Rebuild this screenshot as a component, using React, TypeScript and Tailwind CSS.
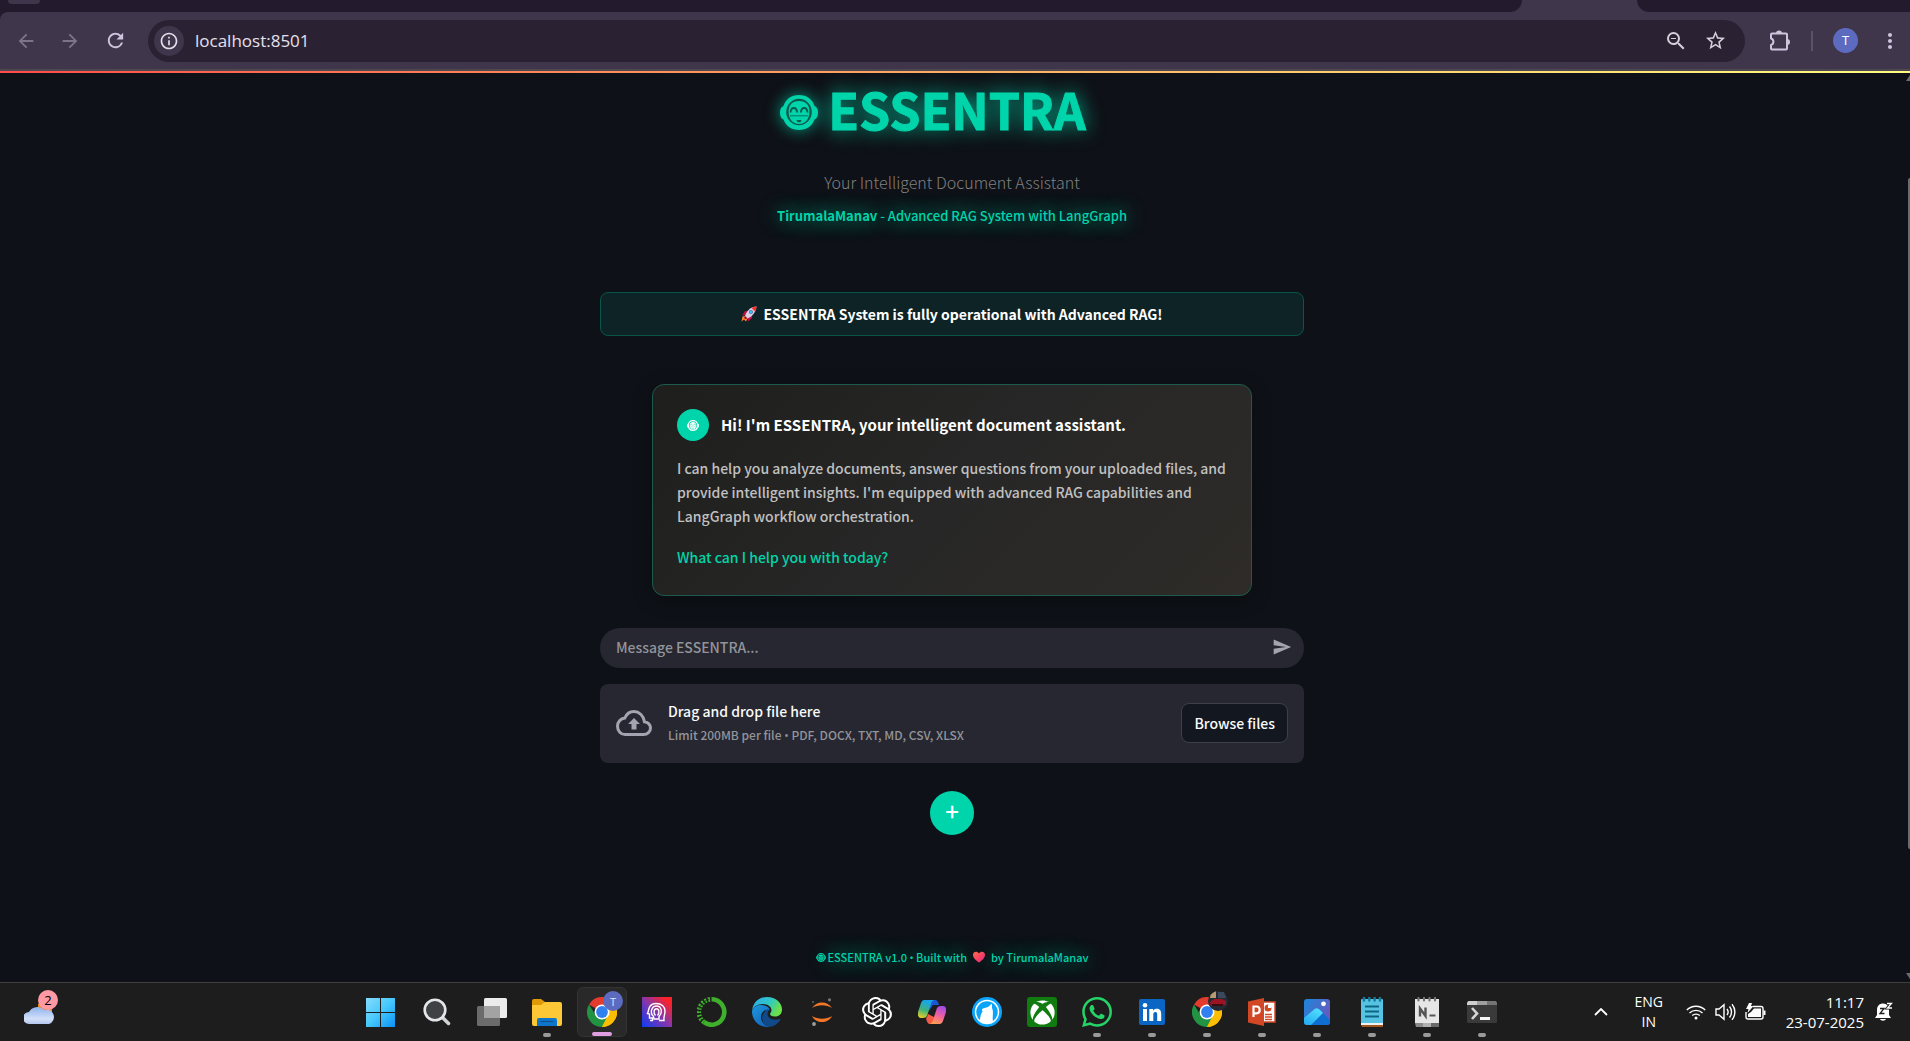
import React from "react";
import {
  MdArrowBack,
  MdArrowForward,
  MdInfoOutline,
  MdMoreVert,
  MdRefresh,
  MdSend,
  MdStarBorder,
  MdZoomOut,
} from "react-icons/md";
import { SiOpenai, SiWhatsapp } from "react-icons/si";
import { FaXbox } from "react-icons/fa";

const sans = "font-['Noto_Sans_CJK_SC','Source_Sans_Pro',sans-serif]";
const ui = "font-['Open_Sans','Segoe_UI',sans-serif]";

function RobotFace({ className, hole }: { className: string; hole: string }) {
  return (
    <svg viewBox="0 0 38 35" className={className} aria-hidden="true">
      <path
        d="M19 0C27 0 32.500 4.500 34.500 11C37 12 38 14.500 38 17.500C38 21 37 23.500 34.500 24.500C32 31 26.500 35 19 35C11.500 35 6 31 3.500 24.500C1 23.500 0 21 0 17.500C0 14.500 1 12 3.500 11C5.500 4.500 11 0 19 0Z"
        fill="currentColor"
      />
      <ellipse cx="19" cy="17" rx="12.800" ry="13.200" fill={hole} />
      <path d="M19 6C25.500 6 29.400 10 29.400 16.500C29.400 24 25.500 29 19 29C12.500 29 8.600 24 8.600 16.500C8.600 10 12.500 6 19 6Z" fill="currentColor" />
      <path d="M10.500 17.500C11 11.500 16.500 11.500 17.200 17.500M20.800 17.500C21.500 11.500 27 11.500 27.500 17.500" fill="none" stroke={hole} strokeWidth="1.800" />
      <path d="M10 20.800H28" stroke={hole} strokeWidth="0.800" />
      <path d="M16.500 25H21.500L20.500 27.200H17.500Z" fill={hole} />
    </svg>
  );
}

function Rocket() {
  return (
    <svg viewBox="0 0 32 32" className="size-4 shrink-0" role="img" aria-label="rocket">
      <path d="M3 21L10 19L14 24L10 31L6 27L1 31Z" fill="#ff822d" />
      <path d="M13 10H8L2 19L10 18ZM22 18V24L14 31L13 22Z" fill="#ca0b4a" />
      <path d="M31 1C22 1 12 7 8 20L13 25C25 20 30 10 31 1Z" fill="#d8cfe4" />
      <path d="M31 1C27 1 24 2 21 4L28 11C30 8 31 4 31 1Z" fill="#f8312f" />
      <path d="M8 20L13 25L9 26L6 24Z" fill="#990838" />
      <circle cx="20" cy="12" r="4" fill="#5c6c9e" />
      <circle cx="20" cy="12" r="2.500" fill="#26c9fc" />
    </svg>
  );
}

function Heart() {
  return (
    <svg viewBox="0 0 28 26" className="h-3 w-[14px] shrink-0" role="img" aria-label="love">
      <defs>
        <linearGradient id="heart" x1="0" y1="0" x2="1" y2="1">
          <stop offset="0" stopColor="#ff6b4a" />
          <stop offset="0.600" stopColor="#fb3a66" />
          <stop offset="1" stopColor="#e0259a" />
        </linearGradient>
      </defs>
      <path d="M14 25C7 20 1 15 1 8C1 1 10-1 14 5C18-1 27 1 27 8C27 15 21 20 14 25Z" fill="url(#heart)" />
    </svg>
  );
}

function Bullet() {
  return <span className="font-['Open_Sans',sans-serif] leading-none">•</span>;
}

function Puzzle() {
  return (
    <svg viewBox="0 0 22 22" className="size-[22px]" aria-hidden="true">
      <path
        d="M3 3.500H17Q18 3.500 18 4.500V18.500Q18 19.500 17 19.500H3Q2 19.500 2 18.500V15A3.400 3.400 0 0 0 2 8.500V4.500Q2 3.500 3 3.500Z"
        fill="none"
        stroke="currentColor"
        strokeWidth="2"
        strokeLinejoin="round"
      />
      <path d="M7 3.500A3 3 0 0 1 13 3.500ZM18 9A3 3 0 0 1 18 15Z" fill="currentColor" />
    </svg>
  );
}

function BrowserChrome() {
  return (
    <header className="bg-[#231b2d]">
      <div className="flex h-3 bg-[#3f364b]">
        <div className="flex-1 rounded-br-[14px] bg-[#231b2d]">
          <div className="ml-2 h-1 w-8 rounded-b-full bg-[#3f364b]" />
        </div>
        <div className="w-[115px]" />
        <div className="w-[273px] rounded-bl-[14px] bg-[#231b2d]" />
      </div>
      <div className="flex h-[57px] items-center rounded-tl-[8px] bg-[#3f364b] pr-2 text-[#cfc3de]">
        <button aria-label="Back" className="ml-[15px] text-[#7d7489]">
          <MdArrowBack className="size-[22px]" />
        </button>
        <button aria-label="Forward" className="ml-[22px] text-[#7d7489]">
          <MdArrowForward className="size-[22px]" />
        </button>
        <button aria-label="Reload" className="ml-[23px]">
          <MdRefresh className="size-[23px]" />
        </button>
        <div className="ml-[21px] flex h-[42px] flex-1 items-center rounded-full bg-[#2a2233] pr-[18px] pl-[6px]">
          <button aria-label="View site information" className="flex size-[30px] items-center justify-center rounded-full bg-[#3f364b] text-[#e4dfe9]">
            <MdInfoOutline className="size-5" />
          </button>
          <input
            aria-label="Address"
            defaultValue="localhost:8501"
            className={`ml-[11px] min-w-0 flex-1 bg-transparent text-[17px] text-[#e6e0ec] outline-none ${ui}`}
          />
          <button aria-label="Zoom" className="text-[#d5cfdb]">
            <MdZoomOut className="size-6" />
          </button>
          <button aria-label="Bookmark this page" className="ml-4 text-[#d5cfdb]">
            <MdStarBorder className="size-[23px]" />
          </button>
        </div>
        <button aria-label="Extensions" className="ml-[24px]">
          <Puzzle />
        </button>
        <div className="ml-[20px] h-5 w-[2px] bg-[#5b5168]" />
        <button aria-label="Profile" className={`ml-[20px] flex size-[25px] items-center justify-center rounded-full bg-[#5c6bc0] text-[13px] leading-none text-white ${ui}`}>
          T
        </button>
        <button aria-label="More" className="ml-5">
          <MdMoreVert className="size-6" />
        </button>
      </div>
      <div className="h-[2px] bg-[#4d474f]" />
      <div className="h-[2px] bg-linear-to-r from-[#ff4b4b] to-[#fffd80]" />
    </header>
  );
}

function WelcomeCard() {
  return (
    <section className="mt-12 w-full max-w-[600px] rounded-xl border border-[#1c5a4c] bg-linear-135 from-[#1e1e1c] via-[#272727] to-[#2e2b28] p-6 shadow-[0_4px_20px_rgba(0,0,0,0.3)]">
      <div className="flex items-center gap-3">
        <div className="flex size-8 items-center justify-center rounded-full bg-[#00d4aa] text-white">
          <RobotFace className="h-[11px] w-3" hole="#00d4aa" />
        </div>
        <h2 className="text-[15px] leading-6 font-bold text-white">Hi! I'm ESSENTRA, your intelligent document assistant.</h2>
      </div>
      <p className="mt-[15px] text-[14px] leading-6 font-medium text-[#c0c0c0]">
        I can help you analyze documents, answer questions from your uploaded files, and provide intelligent insights. I'm equipped
        with advanced RAG capabilities and LangGraph workflow orchestration.
      </p>
      <p className="mt-[17px] mb-0.5 text-[14px] leading-6 font-medium text-[#00d4aa]">What can I help you with today?</p>
    </section>
  );
}

function Composer() {
  return (
    <form className="mt-8 flex h-10 w-full items-center rounded-full bg-[#262730] pr-3 pb-0.5 pl-4" onSubmit={(e) => e.preventDefault()}>
      <input
        aria-label="Message ESSENTRA"
        placeholder="Message ESSENTRA..."
        className="min-w-0 flex-1 bg-transparent text-[14px] font-medium text-white outline-none placeholder:text-[#93949a]"
      />
      <button aria-label="Send" className="text-[#a3a4b0]">
        <MdSend className="size-5" />
      </button>
    </form>
  );
}

function Uploader() {
  return (
    <section className="mt-4 flex w-full items-center rounded-lg bg-[#262730] px-4 pt-[15px] pb-4">
      <svg viewBox="0 0 36 26" className="h-[26px] w-9 shrink-0 text-[#a3a4b0]" aria-hidden="true">
        <path
          d="M9 24.500H27.500C31.500 24.500 34.500 21.500 34.500 18C34.500 14.500 31.500 12 28.500 11.800C27.500 5.500 23 1.500 18 1.500C13.500 1.500 10.500 4 8.800 8C4.500 8.500 1.500 12 1.500 16.200C1.500 21 5 24.500 9 24.500Z"
          fill="none"
          stroke="currentColor"
          strokeWidth="3"
        />
        <path d="M18 8L24 14H20.500V19.500H15.500V14H12Z" fill="currentColor" />
      </svg>
      <div className="ml-4 flex-1">
        <div className="text-[14px] leading-6 font-medium text-[#fafafa]">Drag and drop file here</div>
        <div className="text-[12px] leading-6 font-medium text-[#93949a]">
          Limit 200MB per file <Bullet /> PDF, DOCX, TXT, MD, CSV, XLSX
        </div>
      </div>
      <button className="h-10 rounded-lg border border-[#3e4048] bg-[#131720] px-3 text-[14px] font-medium text-[#fafafa]">Browse files</button>
    </section>
  );
}

function AppPage() {
  return (
    <main className={`flex flex-1 flex-col items-center bg-[#0e1117] pr-[6px] text-white ${sans}`}>
      <div className="flex w-full max-w-[704px] flex-1 flex-col items-center">
        <div className="mt-[5px] mr-[38px] flex items-center gap-[10px] text-[#00d4aa]">
          <RobotFace className="mt-2 h-[35px] w-[38px] drop-shadow-[0_0_8px_rgba(0,212,170,0.7)]" hole="#0a5a4e" />
          <h1 className="text-[50px] leading-[60px] font-bold [-webkit-text-stroke:1px_#00d4aa] [text-shadow:0_0_20px_rgba(0,212,170,0.9)]">ESSENTRA</h1>
        </div>
        <p className="mt-7 text-[16px] leading-8 font-light text-[#808080]">Your Intelligent Document Assistant</p>
        <p className="mt-1.5 text-[13px] leading-6 font-medium text-[#00d4aa] [text-shadow:0_0_20px_#00d4aa]">
          <strong className="font-bold">TirumalaManav</strong> - Advanced RAG System with LangGraph
        </p>
        <div role="status" className="mt-16 flex h-11 w-full items-center justify-center gap-1.5 rounded-lg border border-[#0a5549] bg-[#0d2326] text-[14px] font-bold text-white">
          <Rocket />
          ESSENTRA System is fully operational with Advanced RAG!
        </div>
        <WelcomeCard />
        <Composer />
        <Uploader />
        <button aria-label="Add" className="mt-7 flex size-11 items-center justify-center rounded-full bg-[#00d4aa] pb-1 text-[24px] leading-none font-medium text-white">
          +
        </button>
        <footer className="mt-auto mb-[13px] flex items-center text-[11px] leading-6 font-medium text-[#00d4aa] [text-shadow:0_0_20px_#00d4aa]">
          <RobotFace className="mr-[2px] h-[9px] w-[10px]" hole="#0c2a2c" />
          <span>
            ESSENTRA v1.0 <Bullet /> Built with
          </span>
          <span className="mx-[5px]">
            <Heart />
          </span>
          <span>by TirumalaManav</span>
        </footer>
      </div>
    </main>
  );
}

function ChromeLogo() {
  return (
    <svg viewBox="0 0 30 30" className="size-[30px]">
      <path d="M15 15L2 7.500A15 15 0 0 1 28 7.500Z" fill="#e33b2e" />
      <path d="M15 15L28 7.500A15 15 0 0 1 15 30Z" fill="#fdbd00" />
      <path d="M15 30A15 15 0 0 1 2 7.500L9 19L21 18.500Z" fill="#229342" />
      <path d="M15 8H28.300A15 15 0 0 1 15 30L21 18.500Z" fill="#fdbd00" />
      <circle cx="15" cy="15" r="7.500" fill="#fff" />
      <circle cx="15" cy="15" r="5.900" fill="#3080f0" />
    </svg>
  );
}

const icons: Record<string, React.ReactNode> = {
  Start: (
    <svg viewBox="0 0 29 29" className="mr-1 size-[29px]">
      <defs>
        <linearGradient id="win" x1="0" y1="0" x2="29" y2="29" gradientUnits="userSpaceOnUse">
          <stop offset="0" stopColor="#85dcfc" />
          <stop offset="0.500" stopColor="#45c8fb" />
          <stop offset="1" stopColor="#0b92f8" />
        </linearGradient>
      </defs>
      <path d="M0 0H14V14H0ZM15 0H29V14H15ZM0 15H14V29H0ZM15 15H29V29H15Z" fill="url(#win)" />
    </svg>
  ),
  Search: (
    <svg viewBox="0 0 28 28" className="size-7">
      <path d="M19 19L25.500 25.500" stroke="#cfd3d8" strokeWidth="3.500" strokeLinecap="round" />
      <circle cx="12" cy="12" r="10.300" fill="#3f4144" stroke="#e4e6e9" strokeWidth="2.600" />
    </svg>
  ),
  "Task view": (
    <svg viewBox="0 0 30 28" className="h-7 w-[30px]">
      <rect x="7" y="0" width="23" height="20" rx="1.500" fill="#ececec" />
      <rect x="0" y="8" width="23" height="20" rx="1.500" fill="#6b6b6b" />
      <rect x="7" y="8" width="16" height="12" fill="#a3a3a3" />
    </svg>
  ),
  "File Explorer": (
    <svg viewBox="0 0 30 27" className="h-[27px] w-[30px]">
      <path d="M0 2Q0 0 2 0H9L13 3V8H0Z" fill="#e09a07" />
      <path d="M0 6H9L13 3H28Q30 3 30 5V25Q30 27 28 27H2Q0 27 0 25Z" fill="#fdc835" />
      <path d="M5 27V21Q5 19 7 19H23Q25 19 25 21V27Z" fill="#0f75c8" />
      <path d="M9 22.500H21" stroke="#0a4f8c" strokeWidth="1.200" strokeLinecap="round" />
    </svg>
  ),
  Chrome: <ChromeLogo />,
  Assistant: (
    <svg viewBox="0 0 30 30" className="size-[30px]">
      <defs>
        <linearGradient id="head" x1="0" y1="1" x2="1" y2="0">
          <stop offset="0" stopColor="#0b3df5" />
          <stop offset="0.500" stopColor="#8a35a8" />
          <stop offset="0.850" stopColor="#f9222c" />
        </linearGradient>
      </defs>
      <rect width="30" height="30" fill="url(#head)" />
      <g fill="none" stroke="#fff" strokeWidth="1.400">
        <path d="M8 23.500H10.500V21H7.500V17L5.500 16.500C7 14 6 6.500 14 6.500C20 6.500 23 10 23 14C23 18 21.500 19 22 23.500H17" />
        <path d="M11.500 19.500C7.500 16 9.500 9 14.500 9C19.500 9 21 15.500 17 19.500V22H12Z" />
        <path d="M13.500 18.500C11 15.500 12 11.800 14.500 11.800C17 11.800 18 15.500 15.500 18.500" />
      </g>
    </svg>
  ),
  Anaconda: (
    <svg viewBox="0 0 30 30" className="size-[30px]" fill="none" stroke="#3eb02c">
      <path d="M15 2.300A12.700 12.700 0 1 1 7 25.200" strokeWidth="4.600" />
      <path d="M7 25.200A12.700 12.700 0 0 1 15 2.300" strokeWidth="4.600" strokeDasharray="2 1.500" />
      <path d="M5 23A13 13 0 0 1 12 2.500" strokeWidth="1" stroke="#1d1d1d" strokeDasharray="1.500 1.500" />
    </svg>
  ),
  Edge: (
    <svg viewBox="0 0 30 30" className="size-[30px]">
      <defs>
        <linearGradient id="edgeA" x1="0" y1="0" x2="1" y2="0.400">
          <stop offset="0" stopColor="#2fa8ef" />
          <stop offset="0.600" stopColor="#2fc9c5" />
          <stop offset="1" stopColor="#6be048" />
        </linearGradient>
        <linearGradient id="edgeB" x1="0" y1="0" x2="0.800" y2="1">
          <stop offset="0" stopColor="#1c9bdf" />
          <stop offset="1" stopColor="#1360b8" />
        </linearGradient>
      </defs>
      <path d="M0 14C1 5 7 0 15 0C24 0 30 6 30 12.500C30 17 27 19.500 23 19.500C19.500 19.500 18 18 18 17C18 16 19.500 15.500 19.500 13C19.500 10 16 7 11 7C5 7 1 10 0 14Z" fill="url(#edgeA)" />
      <path d="M0 14C2 9 6 7.500 10 8C15 8.500 18 11 17.500 13C13 12 9 15 9 20C9 25 13 29 18 29.700C8 31.500 0 24 0 14Z" fill="url(#edgeB)" />
      <path d="M12.500 15C14 12.500 16 12 17.500 13C16 14.500 15 16.500 16 19C18 23 24 23.500 28 22C29 22 28.500 23 27.500 24C25 27.500 21.500 29.500 18 29.700C10 28 8 20 12.500 15Z" fill="#114a8b" />
    </svg>
  ),
  Jupyter: (
    <svg viewBox="0 0 22 28" className="h-7 w-[22px]">
      <path d="M1 10C5 2.500 17 2.500 21 10C15 6.300 7 6.300 1 10ZM1 18C7 21.700 15 21.700 21 18C17 26 5 26 1 18Z" fill="#f37726" />
      <circle cx="18.500" cy="1.800" r="1.600" fill="#767677" />
      <circle cx="3" cy="26" r="1.900" fill="#9e9e9e" />
      <circle cx="2" cy="4" r="1" fill="#616262" />
    </svg>
  ),
  ChatGPT: <SiOpenai className="size-[30px] text-white" />,
  Copilot: (
    <svg viewBox="0 0 28 26" className="h-[26px] w-7">
      <defs>
        <linearGradient id="copA" x1="0.300" y1="0" x2="0" y2="1">
          <stop offset="0" stopColor="#18a5ea" />
          <stop offset="0.500" stopColor="#3fb27a" />
          <stop offset="1" stopColor="#ffd21c" />
        </linearGradient>
        <linearGradient id="copB" x1="0.700" y1="0" x2="0.300" y2="1">
          <stop offset="0" stopColor="#a34be8" />
          <stop offset="0.500" stopColor="#f0609e" />
          <stop offset="1" stopColor="#ffa04f" />
        </linearGradient>
      </defs>
      <path d="M12 1H17Q20 1 21 6H15L11 12Z" fill="#1a56d6" />
      <path d="M6 1H17Q14 1 13 5L9 17Q8 19 5 19H3Q-1 19 0 13L3 4Q4 1 6 1Z" fill="url(#copA)" />
      <path d="M8 19Q9 19 10 15L16 18L15 25H12Q9 25 8 19Z" fill="#f25b45" />
      <path d="M22 25H11Q14 25 15 21L19 9Q20 7 23 7H25Q29 7 28 13L25 22Q24 25 22 25Z" fill="url(#copB)" />
    </svg>
  ),
  LibreWolf: (
    <svg viewBox="0 0 30 30" className="size-[30px]">
      <circle cx="15" cy="15" r="15" fill="#0aa5fb" />
      <circle cx="15" cy="15" r="11.500" fill="none" stroke="#fff" strokeWidth="1.500" />
      <path d="M8 24C8 18 10 15 11 14C9.500 14 9.500 12 11 11.500L16 10L20 6.500V11C22 15 20 20 21 24.500C17 27 12 27 8 24Z" fill="#fff" />
    </svg>
  ),
  Xbox: (
    <div className="flex size-[30px] items-center justify-center rounded-[3px] bg-[#107c10] text-white">
      <FaXbox className="size-[25px]" />
    </div>
  ),
  WhatsApp: <SiWhatsapp className="size-[30px] text-[#25d366]" />,
  LinkedIn: (
    <svg viewBox="0 0 26 26" className="size-[26px]">
      <rect width="26" height="26" rx="2" fill="#0a66c2" />
      <circle cx="6" cy="6.200" r="2.300" fill="#fff" />
      <path d="M4 10H8V22H4ZM10.300 10H14.100V11.700C15 10.300 16.300 9.700 17.800 9.700C21.300 9.700 22.200 12 22.200 15.300V22H18.200V16C18.200 14.300 18 13.100 16.400 13.100C14.800 13.100 14.300 14.300 14.300 16V22H10.300Z" fill="#fff" />
    </svg>
  ),
  "Chrome profile": <ChromeLogo />,
  PowerPoint: (
    <svg viewBox="0 0 28 28" className="size-7">
      <rect x="15" y="4" width="12" height="20" fill="#fff" stroke="#d24726" strokeWidth="1.500" />
      <circle cx="20" cy="10" r="3.500" fill="#d24726" />
      <path d="M20 10V6.500H23.500V10Z" fill="#fff" />
      <path d="M17 16.500H24M17 19H24M17 21.500H24" stroke="#d24726" strokeWidth="1.300" />
      <path d="M0 3.500L16 0V28L0 24.500Z" fill="#d24726" />
      <path d="M5.500 19V8.500H8.500Q11.700 8.500 11.700 12Q11.700 15.300 8.500 15.300H5.500" fill="none" stroke="#fff" strokeWidth="2.200" />
    </svg>
  ),
  Photos: (
    <svg viewBox="0 0 26 26" className="size-[26px]">
      <defs>
        <linearGradient id="photo" x1="0" y1="0" x2="1" y2="0.600">
          <stop offset="0" stopColor="#1988dc" />
          <stop offset="1" stopColor="#6a58bd" />
        </linearGradient>
        <linearGradient id="hill" x1="0" y1="1" x2="0.600" y2="0">
          <stop offset="0" stopColor="#22a7f0" />
          <stop offset="1" stopColor="#4edcff" />
        </linearGradient>
      </defs>
      <rect width="26" height="26" rx="3" fill="url(#photo)" />
      <path d="M10 11Q13 7.500 16 11L26 21V23Q26 26 23 26H6Z" fill="#0f6fd0" />
      <path d="M0 19L10 10.500Q13 8 16 11L19 14L7 26H3Q0 26 0 23Z" fill="url(#hill)" />
      <circle cx="19.500" cy="4.800" r="2.400" fill="#fff" />
    </svg>
  ),
  Notepad: (
    <svg viewBox="0 0 22 30" className="h-[30px] w-[22px]">
      <rect y="2" width="22" height="26" rx="1" fill="#56c3e2" />
      <path d="M0 26H22V28H0Z" fill="#f1f1f1" />
      <path d="M0 28H22V30H1Z" fill="#a3561c" />
      <path d="M4 9.500H18M4 14.500H18M4 19.500H18" stroke="#0d6684" strokeWidth="1.800" />
      <path d="M3 .5V3.500M8.300 .5V3.500M13.600 .5V3.500M19 .5V3.500" stroke="#157a9e" strokeWidth="2.400" strokeLinecap="round" />
    </svg>
  ),
  "Notepad terminal": (
    <svg viewBox="0 0 24 30" className="h-[30px] w-6">
      <rect y="2" width="24" height="24" fill="#e6e6e6" />
      <path d="M0 26H8V30H1Z" fill="#8a8a8a" />
      <path d="M8 26H16V30H8Z" fill="#b0b0b0" />
      <path d="M16 26H24V30H16Z" fill="#6a6a6a" />
      <path d="M5 19.500V11.500L10.500 19V10.500" fill="none" stroke="#555" strokeWidth="2.400" />
      <path d="M14.500 18.500H20.500" stroke="#555" strokeWidth="2" />
      <path d="M3.500 1V3.500M9 1V3.500M14.500 1V3.500M20 1V3.500" stroke="#777" strokeWidth="2.200" strokeLinecap="round" />
    </svg>
  ),
  Terminal: (
    <svg viewBox="0 0 30 22" className="h-[22px] w-[30px]">
      <rect width="30" height="22" rx="1.500" fill="#3a3a3a" />
      <path d="M1.500 0H10V4H0V1.500Z" fill="#cfcfcf" />
      <path d="M10 0H20V4H10Z" fill="#a0a0a0" />
      <path d="M20 0H28.500L30 1.500V4H20Z" fill="#757575" />
      <path d="M5 7L10 12.500L5 18" fill="none" stroke="#d5d5d5" strokeWidth="2.600" />
      <path d="M13 17.500H23" stroke="#f5f5f5" strokeWidth="3" />
    </svg>
  ),
};

const running = new Set([
  "File Explorer",
  "WhatsApp",
  "LinkedIn",
  "Chrome profile",
  "PowerPoint",
  "Photos",
  "Notepad",
  "Notepad terminal",
  "Terminal",
]);

function TaskButton({ name }: { name: string }) {
  const active = name === "Chrome";
  return (
    <button
      aria-label={name}
      className={
        active
          ? "relative flex h-[50px] w-[50px] items-center justify-center rounded-md border border-[#333333] bg-[#292929]"
          : "relative flex h-[50px] w-[50px] items-center justify-center"
      }
    >
      {icons[name]}
      {active && (
        <span className={`absolute top-[3px] right-[3px] flex size-5 items-center justify-center rounded-full bg-[#5c6bc0] text-[11px] leading-none text-[#dfe3ff] ${ui}`}>T</span>
      )}
      {name === "Chrome profile" && (
        <svg viewBox="0 0 20 20" className="absolute top-1 right-1 size-5">
          <circle cx="10" cy="10" r="10" fill="#232a33" />
          <path d="M2.500 4A10 10 0 0 1 8 .2V7H2Z" fill="#b59a72" />
          <path d="M10 1H16L18 7H10Z" fill="#3a4a5c" />
          <path d="M2 11L6 8H14L18 10V14L3 15Z" fill="#9c1424" />
          <path d="M4 13H15V15H4Z" fill="#3b0a12" />
        </svg>
      )}
      {active && <span className="absolute bottom-0 h-1 w-5 rounded-full bg-[#e09de0]" />}
      {running.has(name) && <span className="absolute bottom-0 h-1 w-2 rounded-full bg-[#9a9a9a]" />}
    </button>
  );
}

function Weather() {
  return (
    <button aria-label="Weather, 2 alerts" className="relative ml-6 h-[38px] w-[36px]">
      <svg viewBox="0 0 30 20" className="absolute bottom-1 left-0 h-5 w-[30px]">
        <defs>
          <linearGradient id="cloud" x1="0" y1="0" x2="0" y2="1">
            <stop offset="0" stopColor="#8fb2f0" />
            <stop offset="0.700" stopColor="#d3e0f8" />
            <stop offset="1" stopColor="#b5c6ee" />
          </linearGradient>
        </defs>
        <path d="M14 0H28V8H14Z" fill="#f08a1c" />
        <path d="M5 20A5.500 5.500 0 0 1 5 8A9 8.500 0 0 1 20 6A7 7 0 0 1 25 20Z" fill="url(#cloud)" />
      </svg>
      <span className={`absolute top-0 right-[2px] flex size-5 items-center justify-center rounded-full bg-[#ff99a4] text-[13px] leading-none text-black ${ui}`}>2</span>
    </button>
  );
}

function Tray() {
  return (
    <div className={`ml-auto flex items-center text-[14px] leading-5 text-white ${ui}`}>
      <button aria-label="Show hidden icons">
        <svg viewBox="0 0 14 8" className="h-2 w-[14px]">
          <path d="M1 7L7 1L13 7" fill="none" stroke="#fff" strokeWidth="1.800" />
        </svg>
      </button>
      <button className="ml-[25px] w-8 text-center">
        ENG
        <br />
        IN
      </button>
      <button aria-label="Network, volume and battery" className="ml-[21px] flex items-center gap-[9px]">
        <svg viewBox="0 0 20 16" className="h-4 w-5" fill="none" stroke="#fff" strokeWidth="1.400">
          <path d="M.8 6A13 13 0 0 1 19.200 6M3.500 9A9.300 9.300 0 0 1 16.500 9M6.200 11.600A5.500 5.500 0 0 1 13.800 11.600" />
          <circle cx="10" cy="14" r="1.500" fill="#fff" stroke="none" />
        </svg>
        <svg viewBox="0 0 21 18" className="h-[18px] w-[21px]" fill="none" stroke="#fff" strokeWidth="1.400">
          <path d="M1 6H4L9 1.800V16.200L4 12H1Z" />
          <path d="M12 6A5 5 0 0 1 12 12M14.500 3.500A8.500 8.500 0 0 1 14.500 14.500M17 1.200A12 12 0 0 1 17 16.800" />
        </svg>
        <svg viewBox="0 0 21 18" className="h-[18px] w-[21px]">
          <path d="M8 3.500H16Q18 3.500 18 5.500V14Q18 16 16 16H3Q1 16 1 14V9" fill="none" stroke="#fff" strokeWidth="1.400" />
          <path d="M9 5.500H16V14H3V11L6 9Z" fill="#fff" />
          <path d="M18.500 7.500H20.500V12H18.500Z" fill="#fff" />
          <path d="M4 0H7L6 3H8.500L2.500 10L3.500 6H1Z" fill="#fff" />
        </svg>
      </button>
      <button className="ml-5 text-right text-[15px]">
        11:17
        <br />
        23-07-2025
      </button>
      <button aria-label="Notifications" className="mr-[17px] ml-[11px]">
        <svg viewBox="0 0 18 20" className="h-5 w-[18px]">
          <path d="M0 16L2 13V8C2 3.500 5 1.500 8 1.500C12 1.500 14 4.500 14 8V13L16 16ZM5 17H11C10.500 19.300 5.500 19.300 5 17Z" fill="#fff" />
          <path d="M5 6.500H9L5 11.500H9.500" fill="none" stroke="#1d1d1d" strokeWidth="1.300" />
          <path d="M12 1.500H16.500L12.500 6H17" fill="none" stroke="#1d1d1d" strokeWidth="3" />
          <path d="M12 1.500H16.500L12.500 6H17" fill="none" stroke="#fff" strokeWidth="1.300" />
        </svg>
      </button>
    </div>
  );
}

function Taskbar() {
  return (
    <nav className="flex h-[59px] items-center border-t border-[#3f3f3f] bg-[#1d1d1d]">
      <div className="w-[357px] shrink-0">
        <Weather />
      </div>
      <div className="flex gap-[5px]">
        {Object.keys(icons).map((name) => (
          <TaskButton key={name} name={name} />
        ))}
      </div>
      <Tray />
    </nav>
  );
}

export default function App() {
  return (
    <div className="relative flex min-h-screen flex-col bg-[#0e1117]">
      <BrowserChrome />
      <AppPage />
      <Taskbar />
      <div className="absolute top-[178px] right-0 bottom-[192px] w-[2px] rounded-l-sm bg-[#6b6b6b]" />
      <svg viewBox="0 0 4 6" className="absolute top-[75px] right-0 h-[6px] w-1">
        <path d="M4 0L0 6H4Z" fill="#6b6b6b" />
      </svg>
      <svg viewBox="0 0 4 6" className="absolute right-0 bottom-[62px] h-[6px] w-1">
        <path d="M4 6L0 0H4Z" fill="#6b6b6b" />
      </svg>
    </div>
  );
}
